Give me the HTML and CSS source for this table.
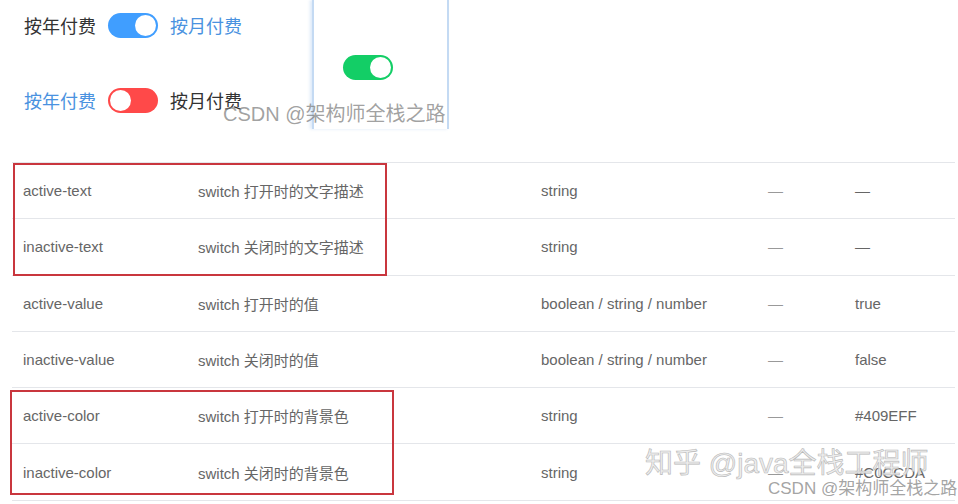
FILE: index.html
```html
<!DOCTYPE html>
<html lang="zh">
<head>
	<meta charset="UTF-8" />
	<title>Switch 属性</title>
	<link rel="stylesheet" href="styles.css">
</head>
<body>

<div class="page">

	<!-- 开关示例 -->
	<div class="demo">
		<div class="demo-left">
			<div class="switch-row">
				<span class="label">按年付费</span>
				<span class="switch on blue"><span class="knob"></span></span>
				<span class="label active">按月付费</span>
			</div>
			<div class="switch-row">
				<span class="label active">按年付费</span>
				<span class="switch off red"><span class="knob"></span></span>
				<span class="label">按月付费</span>
			</div>
		</div>
		<div class="demo-panel">
			<span class="switch on green"><span class="knob"></span></span>
		</div>
	</div>

	<!-- 属性表格 -->
	<div class="table">
		<div class="tr">
			<div class="td">active-text</div>
			<div class="td">switch 打开时的文字描述</div>
			<div class="td">string</div>
			<div class="td">—</div>
			<div class="td">—</div>
		</div>
		<div class="tr">
			<div class="td">inactive-text</div>
			<div class="td">switch 关闭时的文字描述</div>
			<div class="td">string</div>
			<div class="td">—</div>
			<div class="td">—</div>
		</div>
		<div class="tr">
			<div class="td">active-value</div>
			<div class="td">switch 打开时的值</div>
			<div class="td">boolean / string / number</div>
			<div class="td">—</div>
			<div class="td">true</div>
		</div>
		<div class="tr">
			<div class="td">inactive-value</div>
			<div class="td">switch 关闭时的值</div>
			<div class="td">boolean / string / number</div>
			<div class="td">—</div>
			<div class="td">false</div>
		</div>
		<div class="tr">
			<div class="td">active-color</div>
			<div class="td">switch 打开时的背景色</div>
			<div class="td">string</div>
			<div class="td">—</div>
			<div class="td">#409EFF</div>
		</div>
		<div class="tr">
			<div class="td">inactive-color</div>
			<div class="td">switch 关闭时的背景色</div>
			<div class="td">string</div>
			<div class="td">—</div>
			<div class="td">#C0CCDA</div>
		</div>
	</div>

	<!-- 标注框 -->
	<div class="mark mark-text"></div>
	<div class="mark mark-color"></div>

	<!-- 水印 -->
	<div class="wm wm-top">CSDN @架构师全栈之路</div>
	<div class="wm wm-zhihu">知乎 @java全栈工程师</div>
	<div class="wm wm-bottom">CSDN @架构师全栈之路</div>
</div>

</body>
</html>
```

FILE: styles.css
```css
* {
	box-sizing: border-box;
}

body {
	margin: 0;
	background: #fff;
	font-family: 'Liberation Sans', Arial, 'Noto Sans CJK SC', sans-serif;
	color: #666;
}

.page {
	position: relative;
	width: 958px;
	height: 504px;
	overflow: hidden;
}

/* 开关示例 */
.demo {
	display: flex;
	height: 162px;
}

.demo-left {
	width: 312px;
	padding: 11px 0 0 24px;
}

.switch-row {
	display: flex;
	align-items: center;
	gap: 12px;
	height: 28px;
	margin-bottom: 47px;
}

.label {
	font-family: 'Noto Sans CJK SC', sans-serif;
	font-size: 18px;
	color: #333;
}

.label.active {
	color: #4a92e0;
}

.switch {
	position: relative;
	display: inline-block;
	width: 50px;
	height: 25px;
	border-radius: 13px;
}

.switch .knob {
	position: absolute;
	top: 2px;
	width: 21px;
	height: 21px;
	border-radius: 50%;
	background: #fff;
}

.switch.on .knob {
	right: 2px;
}

.switch.off .knob {
	left: 2px;
}

.blue {
	background: #409eff;
}

.red {
	background: #ff4949;
}

.green {
	background: #13ce66;
}

.demo-panel {
	width: 137px;
	height: 129px;
	border-left: 2px solid #c4daf3;
	border-right: 2px solid #c4daf3;
	box-shadow: -2px 0 3px rgba(196, 218, 243, 0.6);
	padding: 55px 0 0 29px;
}

/* 属性表格 */
.table {
	margin: 0 3px 0 12px;
	border-top: 1px solid #e4e6ea;
	font-size: 15px;
}

.tr {
	display: grid;
	grid-template-columns: 175px 343px 227px 87px 1fr;
	height: 56.3px;
	align-items: center;
	border-bottom: 1px solid #e4e6ea;
}

.td {
	padding-left: 11px;
	white-space: nowrap;
}

.tr .td:nth-child(4) {
	color: #999;
}

/* 标注框 */
.mark {
	position: absolute;
	border: 2px solid #c9363e;
}

.mark-text {
	left: 13px;
	top: 163px;
	width: 374px;
	height: 113px;
}

.mark-color {
	left: 10px;
	top: 390px;
	width: 384px;
	height: 105px;
}

/* 水印 */
.wm {
	position: absolute;
	white-space: nowrap;
}

.wm-top {
	left: 223px;
	top: 98px;
	font-size: 20px;
	color: rgba(120, 120, 120, 0.7);
}

.wm-zhihu {
	left: 645px;
	top: 441px;
	font-size: 28px;
	color: rgba(235, 235, 235, 0.9);
	-webkit-text-stroke: 0.6px #b8b8b8;
}

.wm-bottom {
	left: 768px;
	top: 474px;
	font-size: 17px;
	color: rgba(140, 140, 140, 0.8);
}
```
